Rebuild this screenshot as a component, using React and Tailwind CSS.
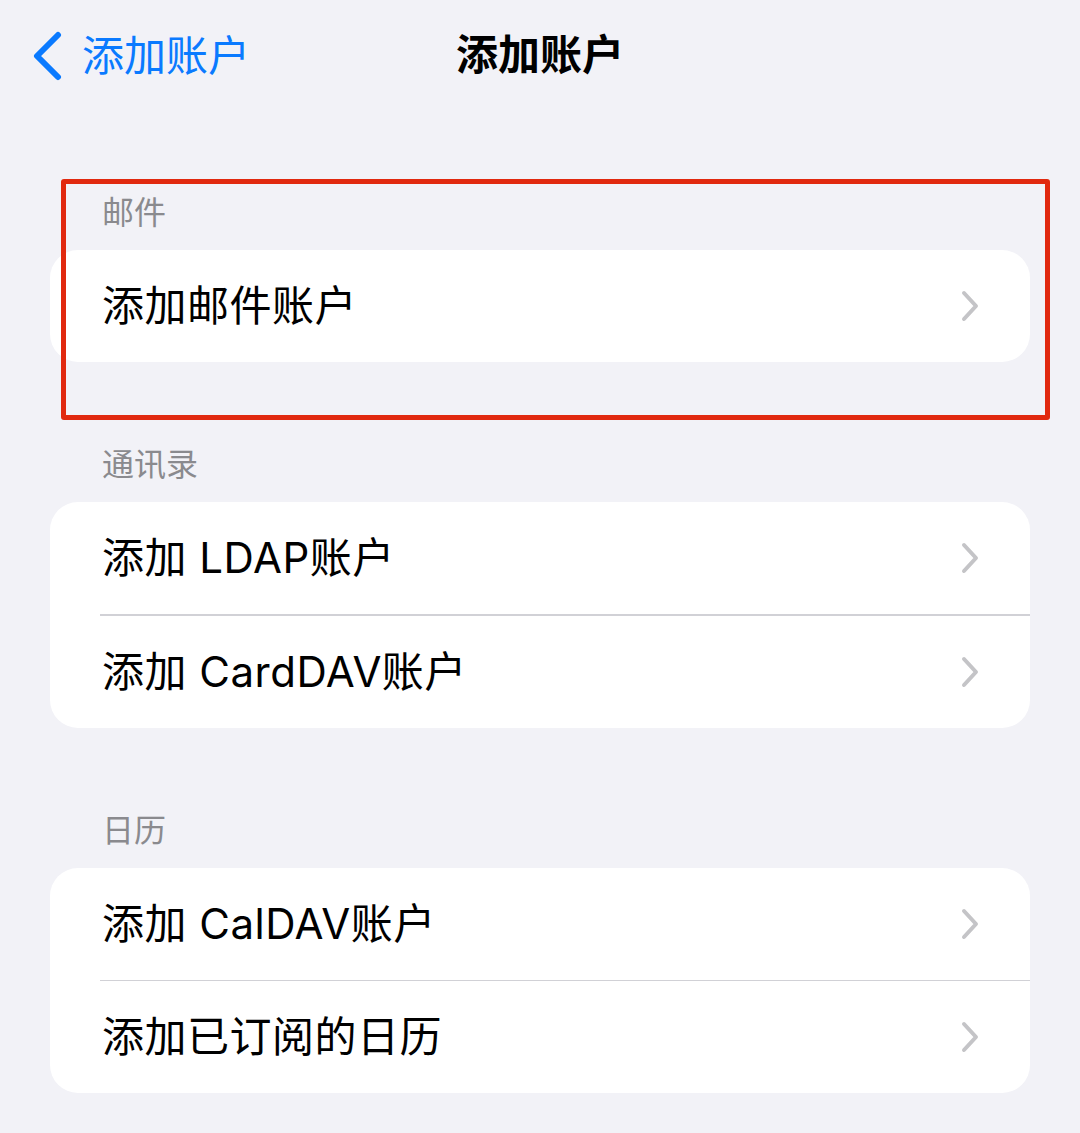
import React from 'react';

const font = { fontFamily: 'Inter, "Noto Sans CJK SC", sans-serif' };

function Chevron() {
  return (
    <svg width="20" height="32" viewBox="0 0 20 32" className="shrink-0">
      <path d="M4 3 L16 16 L4 29" fill="none" stroke="#c4c4c7" strokeWidth="4" strokeLinecap="round" strokeLinejoin="round" />
    </svg>
  );
}

function Row({ label, last }) {
  return (
    <div className="flex flex-col">
      <div className="h-[112px] flex items-center justify-between pl-[52px] pr-[50px]">
        <span className="text-[42px] leading-none text-black tracking-[0.5px]">{label}</span>
        <Chevron />
      </div>
      {!last && <div className="h-[1.5px] bg-[#d1d1d6] ml-[50px]" />}
    </div>
  );
}

function Section({ title, rows }) {
  return (
    <div className="flex flex-col">
      <div className="h-[32px] pl-[102px] mb-[21px] text-[32px] leading-[32px] text-[#8a8a8e]">{title}</div>
      <div className="mx-[50px] bg-white rounded-[28px] overflow-hidden">
        {rows.map((r, i) => (
          <Row key={r} label={r} last={i === rows.length - 1} />
        ))}
      </div>
    </div>
  );
}

export default function App() {
  return (
    <div className="relative w-[1080px] h-[1133px] bg-[#f2f2f7] overflow-hidden" style={font}>
      {/* nav bar */}
      <div className="relative h-[110px] flex items-center justify-center">
        <div className="absolute left-[30px] top-[31px] flex items-center gap-[16px]">
          <svg width="36" height="50" viewBox="0 0 36 50">
            <path d="M28 4 L7 25 L28 46" fill="none" stroke="#0a7aff" strokeWidth="6" strokeLinecap="round" strokeLinejoin="round" />
          </svg>
          <span className="text-[42px] leading-none text-[#0a7aff]">添加账户</span>
        </div>
        <span className="text-[42px] leading-none font-bold text-black">添加账户</span>
      </div>

      <div className="flex flex-col gap-[87px] pt-[87px]">
        <Section title="邮件" rows={['添加邮件账户']} />
        <Section title="通讯录" rows={['添加 LDAP账户', '添加 CardDAV账户']} />
        <Section title="日历" rows={['添加 CalDAV账户', '添加已订阅的日历']} />
      </div>

      {/* red annotation box */}
      <div className="absolute left-[61px] top-[179px] w-[989px] h-[241px] border-[5px] border-[#e1290f] rounded-[3px] pointer-events-none" />
    </div>
  );
}
